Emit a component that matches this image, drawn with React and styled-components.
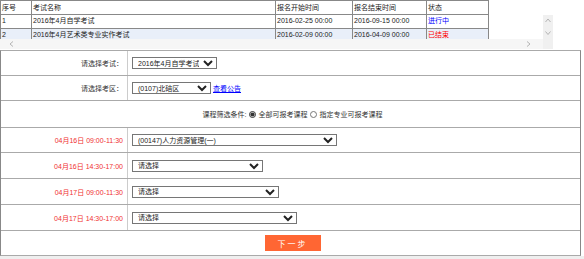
import React from 'react';
import styled, { createGlobalStyle } from 'styled-components';

const GlobalStyle = createGlobalStyle`
  html, body {
    margin: 0;
    padding: 0;
    background: #fff;
  }
  body {
    font-family: "Liberation Sans", "Noto Sans CJK SC", sans-serif;
    font-size: 7px;
    color: #222;
  }
`;

const Page = styled.div`
  width: 584px;
`;

/* ---- exam list grid ---- */
const Grid = styled.div`
  width: 553px;
  margin-bottom: 1px;
`;

const GridTable = styled.table`
  border-collapse: separate;
  border-spacing: 0;
  table-layout: fixed;
  width: 489px;
`;

const Cell = styled.td`
  box-sizing: border-box;
  width: ${p => p.$w}px;
  height: ${p => p.$h || 14}px;
  padding: ${p => (p.$top ? '0 1px' : '1px 1px 0')};
  border-right: 1px solid #888;
  border-bottom: 1px solid #888;
  border-left: ${p => (p.$first ? '1px solid #888' : 'none')};
  border-top: ${p => (p.$top ? '1px solid #888' : 'none')};
  text-align: left;
  vertical-align: ${p => (p.$top ? 'middle' : 'top')};
  font-weight: normal;
  white-space: nowrap;
  overflow: hidden;
  line-height: ${p => (p.$top ? '12px' : '10px')};
  color: ${p => p.$color || '#222'};
`;

const Row = styled.tr`
  background: ${p => (p.$alt ? '#e9eff9' : '#fff')};
`;

const GridBody = styled.div`
  display: flex;
  height: 34px;
`;

const GridView = styled.div`
  width: 543px;
  display: flex;
  flex-direction: column;
`;

const GridClip = styled.div`
  height: 24px;
  overflow: hidden;
`;

const HScroll = styled.div`
  height: 10px;
  background: #f6f6f6;
  display: flex;
  align-items: center;
  justify-content: space-between;
  padding: 0 11px 0 9px;
`;

const VScroll = styled.div`
  width: 10px;
  background: #f0f0f0;
  display: flex;
  flex-direction: column;
  align-items: center;
  gap: 6px;
  padding-top: 3px;
  box-sizing: border-box;
`;

const Chevron = ({ dir }) => {
  const pts = {
    left: '4,0.5 1,3 4,5.5',
    right: '1,0.5 4,3 1,5.5',
    up: '0.5,4 3,1 5.5,4',
    down: '0.5,1.5 3,4.5 5.5,1.5',
  }[dir];
  return (
    <svg width="6" height="6" viewBox="0 0 6 6">
      <polyline points={pts} fill="none" stroke="#b4b4b4" strokeWidth="1" />
    </svg>
  );
};

/* ---- registration form ---- */
const Form = styled.div`
  width: 581px;
  box-sizing: border-box;
  border: 1px solid #888;
  border-top-color: #aaa;
  border-bottom-color: #aaa;
`;

const FormRow = styled.div`
  display: grid;
  grid-template-columns: ${p => (p.$wide ? '1fr' : '127px 1fr')};
  height: ${p => p.$h}px;
  box-sizing: border-box;
  border-bottom: ${p => (p.$last ? 'none' : '1px solid #aaa')};
`;

const Label = styled.div`
  display: flex;
  align-items: center;
  justify-content: flex-end;
  padding-right: 4px;
  border-right: 1px solid #ccc;
  color: ${p => (p.$red ? '#f03030' : '#333')};
`;

const Value = styled.div`
  display: flex;
  align-items: center;
  justify-content: ${p => (p.$center ? 'center' : 'flex-start')};
  padding-left: 4px;
  color: #333;
`;

const Select = styled.select`
  width: ${p => p.$w}px;
  height: 12px;
  box-sizing: border-box;
  font-family: inherit;
  font-size: 7px;
  color: #222;
  background: #fff;
  border: 1px solid #767676;
  border-radius: 0;
  padding: 0 1px;
  margin: 0;
`;

const Link = styled.a`
  color: #00f;
  text-decoration: underline;
  margin-left: 2px;
`;

const Radio = styled.input`
  width: 7px;
  height: 7px;
  margin: 0 2px 0 3px;
  accent-color: #333;
`;

const NextButton = styled.button`
  width: 56px;
  height: 16px;
  border: none;
  background: #ff6633;
  color: #fff;
  font-family: inherit;
  font-size: 8px;
  letter-spacing: 2px;
  padding: 0;
`;

const Footer = styled.div`
  height: 8px;
  background: #efefef;
`;

const widths = [32, 244, 77, 74, 62];

const exams = [
  { id: 1, name: '2016年4月自学考试', start: '2016-02-25 00:00', end: '2016-09-15 00:00', state: '进行中', color: '#0000ff' },
  { id: 2, name: '2016年4月艺术类专业实作考试', start: '2016-02-09 00:00', end: '2016-04-09 00:00', state: '已结束', color: '#ff0000' },
];

const sessions = [
  { time: '04月16日 09:00-11:30', w: 205, value: '(00147)人力资源管理(一)', h: 25 },
  { time: '04月16日 14:30-17:00', w: 131, value: '请选择', h: 26 },
  { time: '04月17日 09:00-11:30', w: 147, value: '请选择', h: 26 },
  { time: '04月17日 14:30-17:00', w: 165, value: '请选择', h: 26 },
];

export default function App() {
  return (
    <Page>
      <GlobalStyle />
      <Grid>
        <GridTable>
          <thead>
            <tr>
              {['序号', '考试名称', '报名开始时间', '报名结束时间', '状态'].map((t, i) => (
                <Cell as="th" key={t} $w={widths[i]} $first={i === 0} $top $h={15}>
                  {t}
                </Cell>
              ))}
            </tr>
          </thead>
        </GridTable>
        <GridBody>
          <GridView>
            <GridClip>
              <GridTable>
                <tbody>
                  {exams.map((e, r) => (
                    <Row key={e.id} $alt={r === 1}>
                      <Cell $w={widths[0]} $first>{e.id}</Cell>
                      <Cell $w={widths[1]}>{e.name}</Cell>
                      <Cell $w={widths[2]}>{e.start}</Cell>
                      <Cell $w={widths[3]}>{e.end}</Cell>
                      <Cell $w={widths[4]} $color={e.color}>{e.state}</Cell>
                    </Row>
                  ))}
                </tbody>
              </GridTable>
            </GridClip>
            <HScroll>
              <Chevron dir="left" />
              <Chevron dir="right" />
            </HScroll>
          </GridView>
          <VScroll>
            <Chevron dir="up" />
            <Chevron dir="down" />
          </VScroll>
        </GridBody>
      </Grid>

      <Form>
        <FormRow $h={25}>
          <Label>请选择考试：</Label>
          <Value>
            <Select $w={85} defaultValue="a">
              <option value="a">2016年4月自学考试</option>
            </Select>
          </Value>
        </FormRow>
        <FormRow $h={25}>
          <Label>请选择考区：</Label>
          <Value>
            <Select $w={79} defaultValue="a">
              <option value="a">(0107)北碚区</option>
            </Select>
            <Link href="#">查看公告</Link>
          </Value>
        </FormRow>
        <FormRow $h={27} $wide>
          <Value $center>
            课程筛选条件:
            <Radio type="radio" name="filter" defaultChecked />
            全部可报考课程
            <Radio type="radio" name="filter" />
            指定专业可报考课程
          </Value>
        </FormRow>
        {sessions.map(s => (
          <FormRow key={s.time} $h={s.h}>
            <Label $red>{s.time}</Label>
            <Value>
              <Select $w={s.w} defaultValue="a">
                <option value="a">{s.value}</option>
              </Select>
            </Value>
          </FormRow>
        ))}
        <FormRow $h={24} $wide $last>
          <Value $center>
            <NextButton type="button">下一步</NextButton>
          </Value>
        </FormRow>
      </Form>
      <Footer />
    </Page>
  );
}
